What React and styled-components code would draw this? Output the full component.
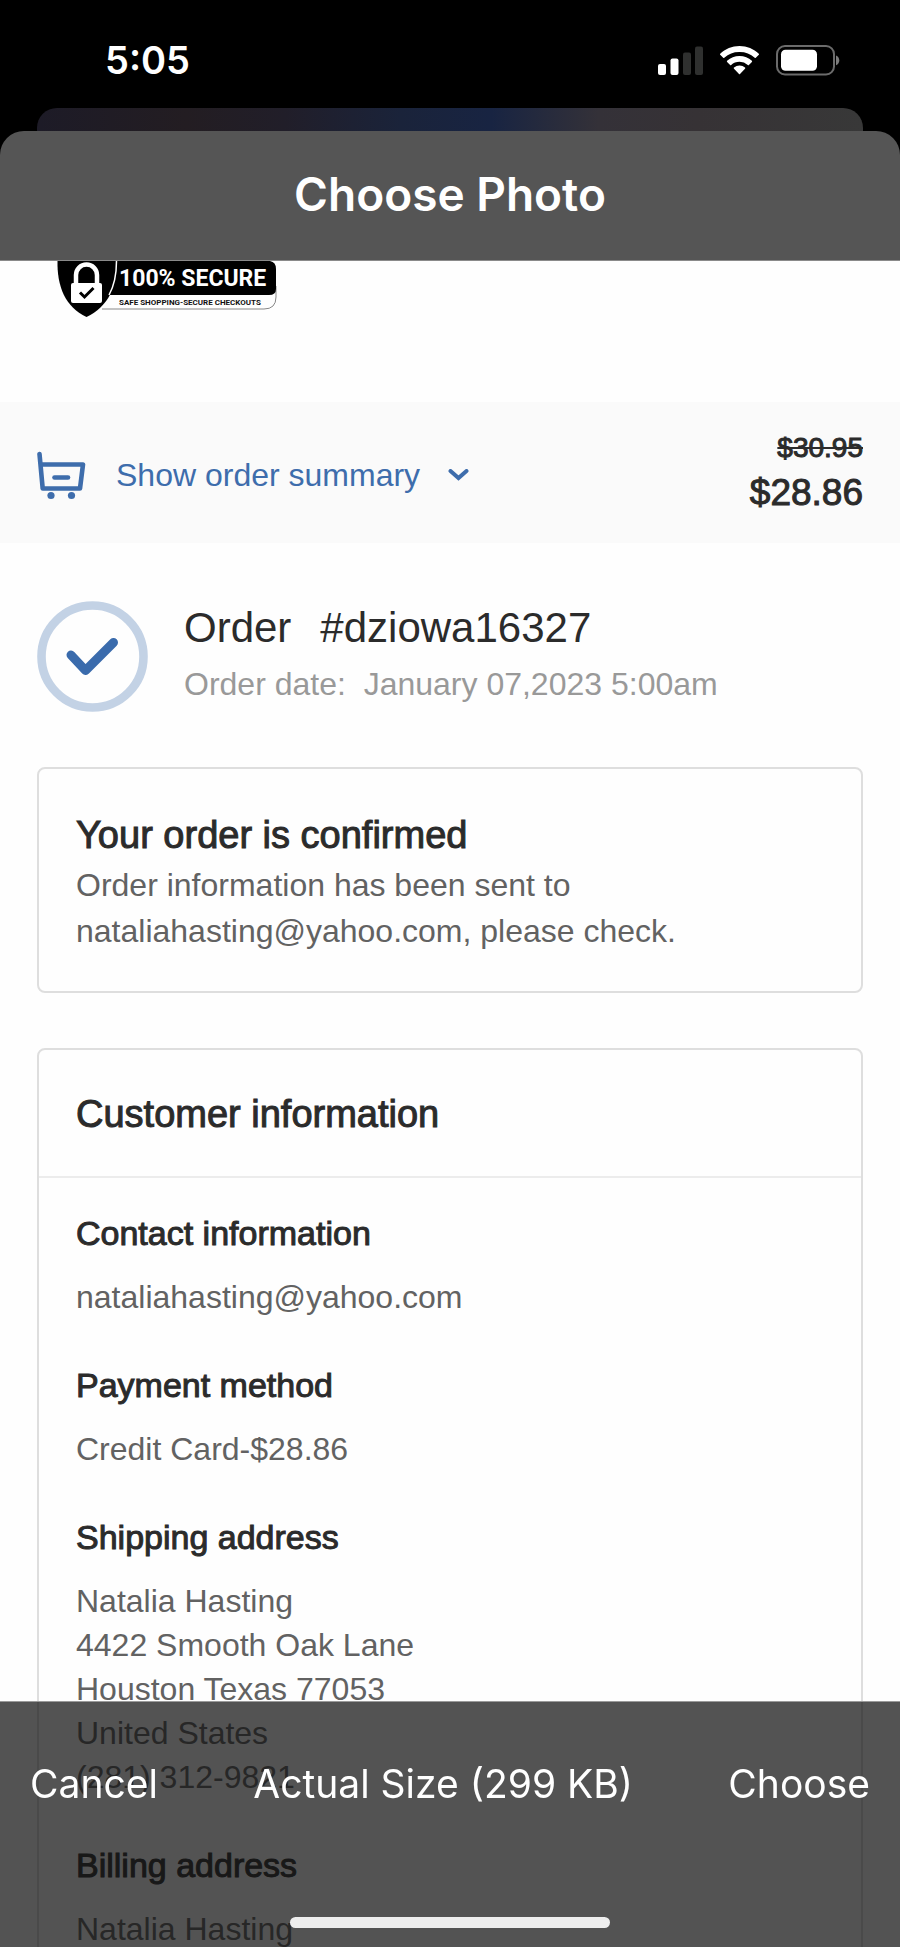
import React from 'react'
import styled, { createGlobalStyle } from 'styled-components'

const GlobalStyle = createGlobalStyle`
  * {
    box-sizing: border-box;
  }
  body {
    margin: 0;
    background: #000;
    font-family: "Liberation Sans", Arial, sans-serif;
  }
  h1, h2, h3, p {
    margin: 0;
    font-weight: 400;
  }
  button {
    border: 0;
    padding: 0;
    background: none;
    cursor: pointer;
  }
`

const Screen = styled.div`
  display: flex;
  flex-direction: column;
  height: 100vh;
  overflow: hidden;
`
const StatusBar = styled.div`
  display: flex;
  flex: none;
  align-items: center;
  justify-content: space-between;
  height: 108px;
  padding: 12px 60px 0 105px;
  color: #fff;
`
const Time = styled.span`
  font-family: Inter, sans-serif;
  font-size: 38px;
  font-weight: 600;
`
const StatusIcons = styled.div`
  display: flex;
  align-items: center;
  gap: 17px;
`
const BackSheet = styled.div`
  flex: none;
  height: 23px;
  margin: 0 37px;
  border-radius: 20px 20px 0 0;
  background: linear-gradient(90deg, #1d1b27, #231d22 18%, #211e29 30%, #1a233a 44%, #182442 55%, #343138 68%, #363235 80%, #383838);
`
const SheetHeader = styled.header`
  flex: none;
  padding: 33px 0 36px;
  border-bottom: 1px solid #8a8a8a;
  border-radius: 24px 24px 0 0;
  background: #555;
  color: #fff;
  text-align: center;
`
const SheetTitle = styled.h1`
  font-family: Inter, sans-serif;
  font-size: 46px;
  font-weight: 600;
  line-height: 60px;
`
const Content = styled.main`
  flex: 1;
  overflow: hidden;
  background: #fefefe;
`
const BadgeRow = styled.div`
  display: flex;
  height: 141px;
  padding-left: 56px;
`
const SummaryBar = styled.div`
  display: flex;
  align-items: center;
  justify-content: space-between;
  padding: 28px 37px 23px;
  background: #fafafa;
`
const SummaryToggle = styled.button`
  display: flex;
  align-items: center;
  color: #3e6dac;
  font-family: inherit;
  font-size: 32px;
  line-height: 44px;
`
const SummaryLabel = styled.span`
  margin: 0 28px 0 30px;
`
const Prices = styled.div`
  display: flex;
  flex-direction: column;
  color: #2b2b2b;
  text-align: right;
`
const OldPrice = styled.s`
  font-size: 28px;
  line-height: 36px;
  -webkit-text-stroke: 1px;
`
const Price = styled.span`
  font-size: 37px;
  line-height: 54px;
  -webkit-text-stroke: 1px;
`
const OrderRow = styled.section`
  display: flex;
  align-items: center;
  gap: 36px;
  padding: 57px 37px 55px;
`
const OrderTitle = styled.h2`
  display: flex;
  gap: 29px;
  color: #2b2b2b;
  font-size: 42px;
  line-height: 56px;
`
const OrderDate = styled.p`
  color: #999;
  font-size: 32px;
  line-height: 56px;
  white-space: pre-wrap;
`
const Card = styled.section`
  margin: 0 37px 55px;
  border: 2px solid #dedede;
  border-radius: 8px;
`
const Notice = styled.div`
  padding: 39px 37px 37px;
`
const CardHeader = styled.div`
  padding: 37px 37px 35px;
  border-bottom: 2px solid #ececec;
`
const CardTitle = styled.h2`
  color: #2b2b2b;
  font-size: 38px;
  line-height: 54px;
  -webkit-text-stroke: 1px;
`
const NoticeText = styled.p`
  max-width: 640px;
  color: #626262;
  font-size: 32px;
  line-height: 46px;
`
const CardBody = styled.div`
  display: flex;
  flex-direction: column;
  gap: 44px;
  padding: 33px 37px;
`
const InfoTitle = styled.h3`
  margin-bottom: 20px;
  color: #2b2b2b;
  font-size: 34px;
  line-height: 44px;
  -webkit-text-stroke: 1px;
`
const InfoLine = styled.p`
  color: #626262;
  font-size: 32px;
  line-height: 44px;
`
const Toolbar = styled.footer`
  position: fixed;
  right: 0;
  bottom: 0;
  left: 0;
  display: flex;
  flex-direction: column;
  align-items: center;
  justify-content: space-between;
  height: 246px;
  padding: 58px 30px 19px;
  border-top: 1px solid #9a9a9a;
  background: rgba(16, 16, 16, 0.72);
`
const ToolbarActions = styled.div`
  display: flex;
  justify-content: space-between;
  width: 100%;
`
const ToolbarButton = styled.button`
  color: #fff;
  font-family: Inter, sans-serif;
  font-size: 39px;
  line-height: 48px;
`
const HomeIndicator = styled.div`
  width: 38%;
  height: 11px;
  border-radius: 6px;
  background: #eee;
`

const sections = [
  { title: 'Contact information', lines: ['nataliahasting@yahoo.com'] },
  { title: 'Payment method', lines: ['Credit Card-$28.86'] },
  {
    title: 'Shipping address',
    lines: ['Natalia Hasting', '4422 Smooth Oak Lane', 'Houston Texas 77053', 'United States', '(281) 312-9821'],
  },
  { title: 'Billing address', lines: ['Natalia Hasting'] },
]

const SignalIcon = () => (
  <svg width="45" height="29" viewBox="0 0 45 29" fill="#fff">
    <rect x="0" y="18" width="8" height="11" rx="2" />
    <rect x="12.5" y="12.500" width="8" height="16.500" rx="2" />
    <rect x="25" y="6.500" width="8" height="22.500" rx="2" fill="#2f302f" />
    <rect x="37" y="0.500" width="8" height="28.500" rx="2" fill="#2f302f" />
  </svg>
)

const WifiIcon = () => (
  <svg width="39" height="29" viewBox="0 0 39 29" fill="#fff">
    <path d="M19.500 0C27 0 33.800 2.900 38.800 7.700a.8.8 0 0 1 0 1.100l-3 3a.8.8 0 0 1-1.100 0A22 22 0 0 0 19.500 6 22 22 0 0 0 4.300 11.800a.8.8 0 0 1-1.100 0l-3-3a.8.8 0 0 1 0-1.100C5.200 2.900 12 0 19.500 0z" />
    <path d="M19.500 10c4.800 0 9.100 1.800 12.400 4.800a.8.8 0 0 1 0 1.100l-3 3a.8.8 0 0 1-1.100 0A12.500 12.500 0 0 0 19.500 15.800c-3.200 0-6.100 1.200-8.300 3.100a.8.8 0 0 1-1.100 0l-3-3a.8.8 0 0 1 0-1.100A18.300 18.300 0 0 1 19.500 10z" />
    <path d="M19.500 19.600c2.100 0 4 .8 5.500 2a.8.8 0 0 1 0 1.200l-5 5.100a.7.700 0 0 1-1 0l-5-5.100a.8.8 0 0 1 0-1.200 8.600 8.600 0 0 1 5.500-2z" />
  </svg>
)

const BatteryIcon = () => (
  <svg width="64" height="31" viewBox="0 0 64 31">
    <rect x="1" y="1" width="57" height="28.500" rx="8" fill="none" stroke="#6b6b6b" strokeWidth="2" />
    <rect x="5" y="4.800" width="36" height="21" rx="4.500" fill="#fff" />
    <path d="M60 10.500c4.400 1.800 4.400 8 0 9.800z" fill="#7b7b7b" />
  </svg>
)

const SecureBadge = () => (
  <svg width="222" height="58" viewBox="0 0 222 58" role="img" aria-label="100% secure checkout badge">
    <path d="M46 48H208q12 0 12-12V25" fill="none" stroke="#888" strokeWidth="1" />
    <path d="M58 0H214q6 1 6 8V28q0 6-7 6H54z" fill="#000" />
    <path d="M1.500 0H61.500C61.500 25 52 46 30.500 56 9 46 1 25 1.500 0z" fill="#000" />
    <path d="M60.500 0C60.500 13 58 25 53 34" fill="none" stroke="#fff" strokeWidth="1.500" />
    <path d="M20 22V14a10 10 0 0 1 21 0v8" fill="none" stroke="#fff" strokeWidth="4.500" />
    <rect x="15" y="22" width="31" height="20" rx="2" fill="#fff" />
    <path d="M24 31.500l4.500 4.500 9-9" fill="none" stroke="#000" strokeWidth="3" />
    <text x="63" y="25" fill="#fff" fontFamily="Roboto, sans-serif" fontSize="23" fontWeight="700">100% SECURE</text>
    <text x="63" y="44" fill="#111" fontFamily="Roboto, sans-serif" fontSize="8" fontWeight="700">SAFE SHOPPING-SECURE CHECKOUTS</text>
  </svg>
)

const CartIcon = () => (
  <svg width="49" height="49" viewBox="0 0 49 49" fill="none" stroke="#3e6dac" strokeWidth="4.600" strokeLinecap="round" strokeLinejoin="round">
    <path d="M2.500 3l3.200 34.500H43l3-24H5" />
    <path d="M17.500 26.500h13.500" />
    <circle cx="14" cy="44.500" r="3.600" fill="#3e6dac" stroke="none" />
    <circle cx="34.500" cy="44.500" r="3.600" fill="#3e6dac" stroke="none" />
  </svg>
)

const ChevronIcon = () => (
  <svg width="21" height="12" viewBox="0 0 21 12" fill="none" stroke="#3e6dac" strokeWidth="4" strokeLinecap="round">
    <path d="M2.500 2l8 7L18.500 2" />
  </svg>
)

const ConfirmedIcon = () => (
  <svg width="111" height="111" viewBox="0 0 111 111" fill="none">
    <circle cx="55.500" cy="55.500" r="51" stroke="#c3d2e5" strokeWidth="8.600" />
    <path d="M34 54L48.500 69.500 76.500 41.500" stroke="#3a6bac" strokeWidth="9" strokeLinecap="round" strokeLinejoin="round" />
  </svg>
)

const App = () => {
  return (
    <>
      <GlobalStyle />
      <Screen>
        <StatusBar>
          <Time>5:05</Time>
          <StatusIcons>
            <SignalIcon />
            <WifiIcon />
            <BatteryIcon />
          </StatusIcons>
        </StatusBar>
        <BackSheet />
        <SheetHeader>
          <SheetTitle>Choose Photo</SheetTitle>
        </SheetHeader>
        <Content>
          <BadgeRow>
            <SecureBadge />
          </BadgeRow>
          <SummaryBar>
            <SummaryToggle type="button">
              <CartIcon />
              <SummaryLabel>Show order summary</SummaryLabel>
              <ChevronIcon />
            </SummaryToggle>
            <Prices>
              <OldPrice>$30.95</OldPrice>
              <Price>$28.86</Price>
            </Prices>
          </SummaryBar>
          <OrderRow>
            <ConfirmedIcon />
            <div>
              <OrderTitle>
                <span>Order</span>
                <span>#dziowa16327</span>
              </OrderTitle>
              <OrderDate>{'Order date:  January 07,2023 5:00am'}</OrderDate>
            </div>
          </OrderRow>
          <Card>
            <Notice>
              <CardTitle>Your order is confirmed</CardTitle>
              <NoticeText>Order information has been sent to nataliahasting@yahoo.com, please check.</NoticeText>
            </Notice>
          </Card>
          <Card>
            <CardHeader>
              <CardTitle>Customer information</CardTitle>
            </CardHeader>
            <CardBody>
              {sections.map((section) => (
                <div key={section.title}>
                  <InfoTitle>{section.title}</InfoTitle>
                  {section.lines.map((line) => (
                    <InfoLine key={line}>{line}</InfoLine>
                  ))}
                </div>
              ))}
            </CardBody>
          </Card>
        </Content>
        <Toolbar>
          <ToolbarActions>
            <ToolbarButton type="button">Cancel</ToolbarButton>
            <ToolbarButton type="button">Actual Size (299 KB)</ToolbarButton>
            <ToolbarButton type="button">Choose</ToolbarButton>
          </ToolbarActions>
          <HomeIndicator />
        </Toolbar>
      </Screen>
    </>
  )
}

export default App
